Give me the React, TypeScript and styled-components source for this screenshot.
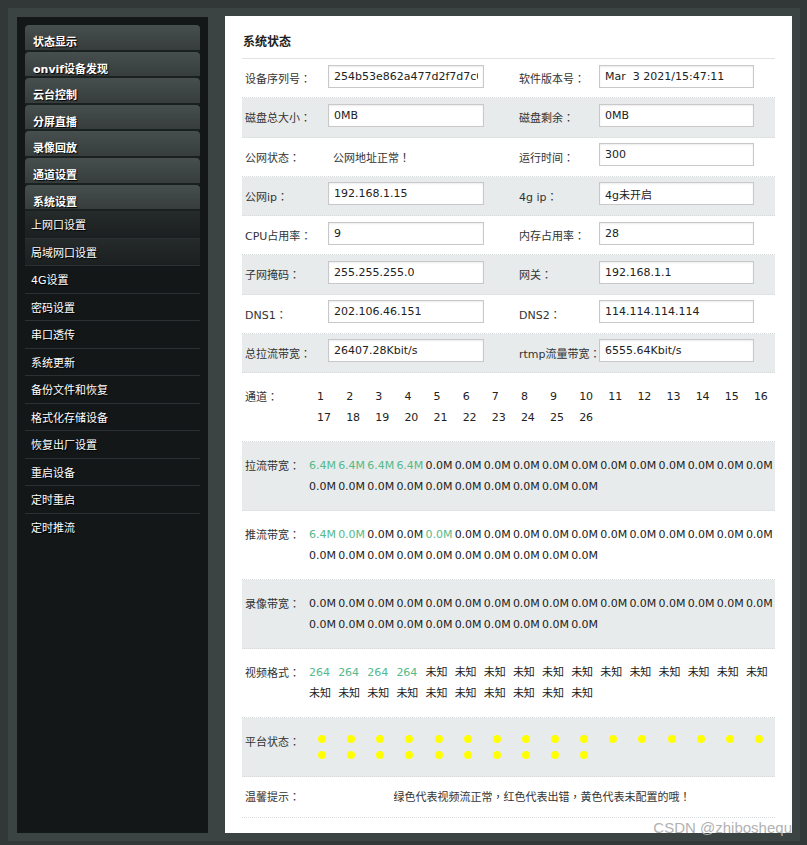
import React from "react";
import styled, { createGlobalStyle } from "styled-components";

const GlobalStyle = createGlobalStyle`
  html, body {
    margin: 0;
    padding: 0;
    background: #313837;
  }
  body {
    font-family: "DejaVu Sans", "Noto Sans CJK SC", sans-serif;
    font-size: 11px;
    color: #333;
  }
  * {
    box-sizing: border-box;
  }
`;

const Frame = styled.div`
  position: relative;
  width: 792px;
  height: 833px;
  margin: 8px 0 0 8px;
  padding: 8px 8px 8px 9px;
  background: #3b4442;
  display: flex;
  gap: 17px;
`;

const Sidebar = styled.div`
  width: 191px;
  margin-top: 1px;
  background: #131718;
  padding: 8px 8px 0 8px;
`;

const MenuItem = styled.div`
  height: 26.6px;
  padding: 11px 0 0 8px;
  line-height: 13px;
  font-size: 11px;
  font-weight: bold;
  color: #fff;
  text-shadow: 1px 1px 1px #000;
  background: linear-gradient(#474f4e, #363d3c);
  border-radius: 4px 4px 0 0;
  border-bottom: 2px solid #1a1f20;
  white-space: nowrap;
`;

const SubMenu = styled.div`
  display: flex;
  flex-direction: column;
`;

const SubItem = styled.div<{ $active?: boolean }>`
  height: 27.5px;
  padding-left: 6px;
  display: flex;
  align-items: center;
  font-size: 11px;
  color: #fff;
  text-shadow: 1px 1px 1px #000;
  background: ${(p) =>
    p.$active ? "linear-gradient(#252a2b, #1b1f20)" : "transparent"};
  border-bottom: 1px solid #2b3132;

  &:last-child {
    border-bottom: none;
  }
`;

const Main = styled.div`
  flex: 1;
  background: #fff;
  padding: 0 17px;
`;

const Title = styled.div`
  padding: 18px 1px 8px;
  font-size: 12px;
  font-weight: bold;
  line-height: 16px;
  color: #222;
  border-bottom: 1px solid #e2e2e2;
`;

const InfoRow = styled.div<{ $gray?: boolean }>`
  display: grid;
  grid-template-columns: 86px 188px 83px 1fr;
  align-items: center;
  height: 39.25px;
  background: ${(p) => (p.$gray ? "#e8ebeb" : "#fff")};
  border-bottom: 1px dotted #d8dbdb;
`;

const Label = styled.div`
  padding-left: 3px;
  color: #333;
  white-space: nowrap;
`;

const Colon = styled.span`
  font-family: "Noto Sans CJK TC", sans-serif;
`;

const Field = styled.input<{ $w?: number }>`
  width: ${(p) => p.$w || 156}px;
  height: 23px;
  margin-bottom: 4px;
  padding: 0 5px;
  border: 1px solid #c8c8c8;
  box-shadow: inset 0 1px 2px rgba(0, 0, 0, 0.08);
  font-family: "DejaVu Sans", "Noto Sans CJK SC", sans-serif;
  font-size: 11px;
  color: #222;
  background: #fff;
  outline: none;
`;

const PlainValue = styled.div`
  padding-left: 5px;
  color: #333;
`;

const BlockRow = styled.div<{ $gray?: boolean; $pad?: number }>`
  display: grid;
  grid-template-columns: 67px 1fr;
  padding: ${(p) => p.$pad ?? 13}px 0;
  background: ${(p) => (p.$gray ? "#e8ebeb" : "#fff")};
  border-bottom: 1px dotted #d8dbdb;
`;

const BlockLabel = styled.div<{ $lh?: number }>`
  padding-left: 3px;
  line-height: ${(p) => p.$lh || 21}px;
  color: #333;
  white-space: nowrap;
`;

const Cells = styled.div`
  display: flex;
  flex-wrap: wrap;
`;

const Cell = styled.span<{ $green?: boolean; $indent?: number; $lh?: number }>`
  width: 6.25%;
  padding-left: ${(p) => p.$indent || 0}px;
  line-height: ${(p) => p.$lh || 21}px;
  height: ${(p) => p.$lh || 21}px;
  color: ${(p) => (p.$green ? "#55b98a" : "#222")};
  white-space: nowrap;
  display: flex;
  align-items: center;
`;

const Dot = styled.span`
  width: 8px;
  height: 8px;
  margin-left: 9px;
  border-radius: 50%;
  background: #ffff00;
`;

const TipText = styled.div`
  line-height: 20px;
  text-align: center;
  color: #333;
`;

const Watermark = styled.div`
  position: absolute;
  top: 812px;
  right: 8px;
  line-height: 16px;
  font-family: "Liberation Sans", Arial, sans-serif;
  font-size: 15px;
  color: #b2b2b2;
  white-space: nowrap;
`;

const topMenu = [
  "状态显示",
  "onvif设备发现",
  "云台控制",
  "分屏直播",
  "录像回放",
  "通道设置",
  "系统设置",
];

const subMenu = [
  "上网口设置",
  "局域网口设置",
  "4G设置",
  "密码设置",
  "串口透传",
  "系统更新",
  "备份文件和恢复",
  "格式化存储设备",
  "恢复出厂设置",
  "重启设备",
  "定时重启",
  "定时推流",
];

type Pair = { label: string; value: string; plain?: boolean };

const infoRows: [Pair, Pair][] = [
  [
    { label: "设备序列号", value: "254b53e862a477d2f7d7c0e1a9" },
    { label: "软件版本号", value: "Mar  3 2021/15:47:11" },
  ],
  [
    { label: "磁盘总大小", value: "0MB" },
    { label: "磁盘剩余", value: "0MB" },
  ],
  [
    { label: "公网状态", value: "公网地址正常", plain: true },
    { label: "运行时间", value: "300" },
  ],
  [
    { label: "公网ip", value: "192.168.1.15" },
    { label: "4g ip", value: "4g未开启" },
  ],
  [
    { label: "CPU占用率", value: "9" },
    { label: "内存占用率", value: "28" },
  ],
  [
    { label: "子网掩码", value: "255.255.255.0" },
    { label: "网关", value: "192.168.1.1" },
  ],
  [
    { label: "DNS1", value: "202.106.46.151" },
    { label: "DNS2", value: "114.114.114.114" },
  ],
  [
    { label: "总拉流带宽", value: "26407.28Kbit/s" },
    { label: "rtmp流量带宽", value: "6555.64Kbit/s" },
  ],
];

const CH = 26;
const channels = Array.from({ length: CH }, (_, i) => i + 1);

const pullRate = channels.map((c) => (c <= 4 ? "6.4M" : "0.0M"));
const pullGreen = channels.map((c) => c <= 4);
const pushRate = channels.map((c) => (c === 1 ? "6.4M" : "0.0M"));
const pushGreen = channels.map((c) => c === 1 || c === 2 || c === 5);
const formats = channels.map((c) => (c <= 4 ? "264" : "未知"));

const withColon = (text: string) => (
  <>
    {text}
    <Colon>：</Colon>
  </>
);

const App: React.FC = () => {
  return (
    <>
      <GlobalStyle />
      <Frame>
        <Sidebar>
          {topMenu.map((name) => (
            <MenuItem key={name}>{name}</MenuItem>
          ))}
          <SubMenu>
            {subMenu.map((name, i) => (
              <SubItem key={name} $active={i < 2}>
                {name}
              </SubItem>
            ))}
          </SubMenu>
        </Sidebar>

        <Main>
          <Title>系统状态</Title>

          {infoRows.map((pair, i) => (
            <InfoRow key={i} $gray={i % 2 === 1}>
              <Label>{withColon(pair[0].label)}</Label>
              {pair[0].plain ? (
                <PlainValue>
                  {pair[0].value}
                  <Colon>！</Colon>
                </PlainValue>
              ) : (
                <Field readOnly defaultValue={pair[0].value} />
              )}
              <Label>{withColon(pair[1].label)}</Label>
              <Field readOnly $w={155} defaultValue={pair[1].value} />
            </InfoRow>
          ))}

          <BlockRow>
            <BlockLabel>{withColon("通道")}</BlockLabel>
            <Cells>
              {channels.map((c) => (
                <Cell key={c} $indent={8}>
                  {c}
                </Cell>
              ))}
            </Cells>
          </BlockRow>

          <BlockRow $gray>
            <BlockLabel>{withColon("拉流带宽")}</BlockLabel>
            <Cells>
              {pullRate.map((v, i) => (
                <Cell key={i} $green={pullGreen[i]}>
                  {v}
                </Cell>
              ))}
            </Cells>
          </BlockRow>

          <BlockRow>
            <BlockLabel>{withColon("推流带宽")}</BlockLabel>
            <Cells>
              {pushRate.map((v, i) => (
                <Cell key={i} $green={pushGreen[i]}>
                  {v}
                </Cell>
              ))}
            </Cells>
          </BlockRow>

          <BlockRow $gray>
            <BlockLabel>{withColon("录像带宽")}</BlockLabel>
            <Cells>
              {channels.map((c) => (
                <Cell key={c}>0.0M</Cell>
              ))}
            </Cells>
          </BlockRow>

          <BlockRow>
            <BlockLabel>{withColon("视频格式")}</BlockLabel>
            <Cells>
              {formats.map((v, i) => (
                <Cell key={i} $green={v === "264"}>
                  {v}
                </Cell>
              ))}
            </Cells>
          </BlockRow>

          <BlockRow $gray>
            <BlockLabel>{withColon("平台状态")}</BlockLabel>
            <Cells>
              {channels.map((c) => (
                <Cell key={c} $lh={16}>
                  <Dot />
                </Cell>
              ))}
            </Cells>
          </BlockRow>

          <BlockRow $pad={9}>
            <BlockLabel $lh={20}>{withColon("温馨提示")}</BlockLabel>
            <TipText>
              绿色代表视频流正常<Colon>，</Colon>红色代表出错<Colon>，</Colon>
              黄色代表未配置的哦<Colon>！</Colon>
            </TipText>
          </BlockRow>
        </Main>

        <Watermark>CSDN @zhiboshequ</Watermark>
      </Frame>
    </>
  );
};

export default App;
